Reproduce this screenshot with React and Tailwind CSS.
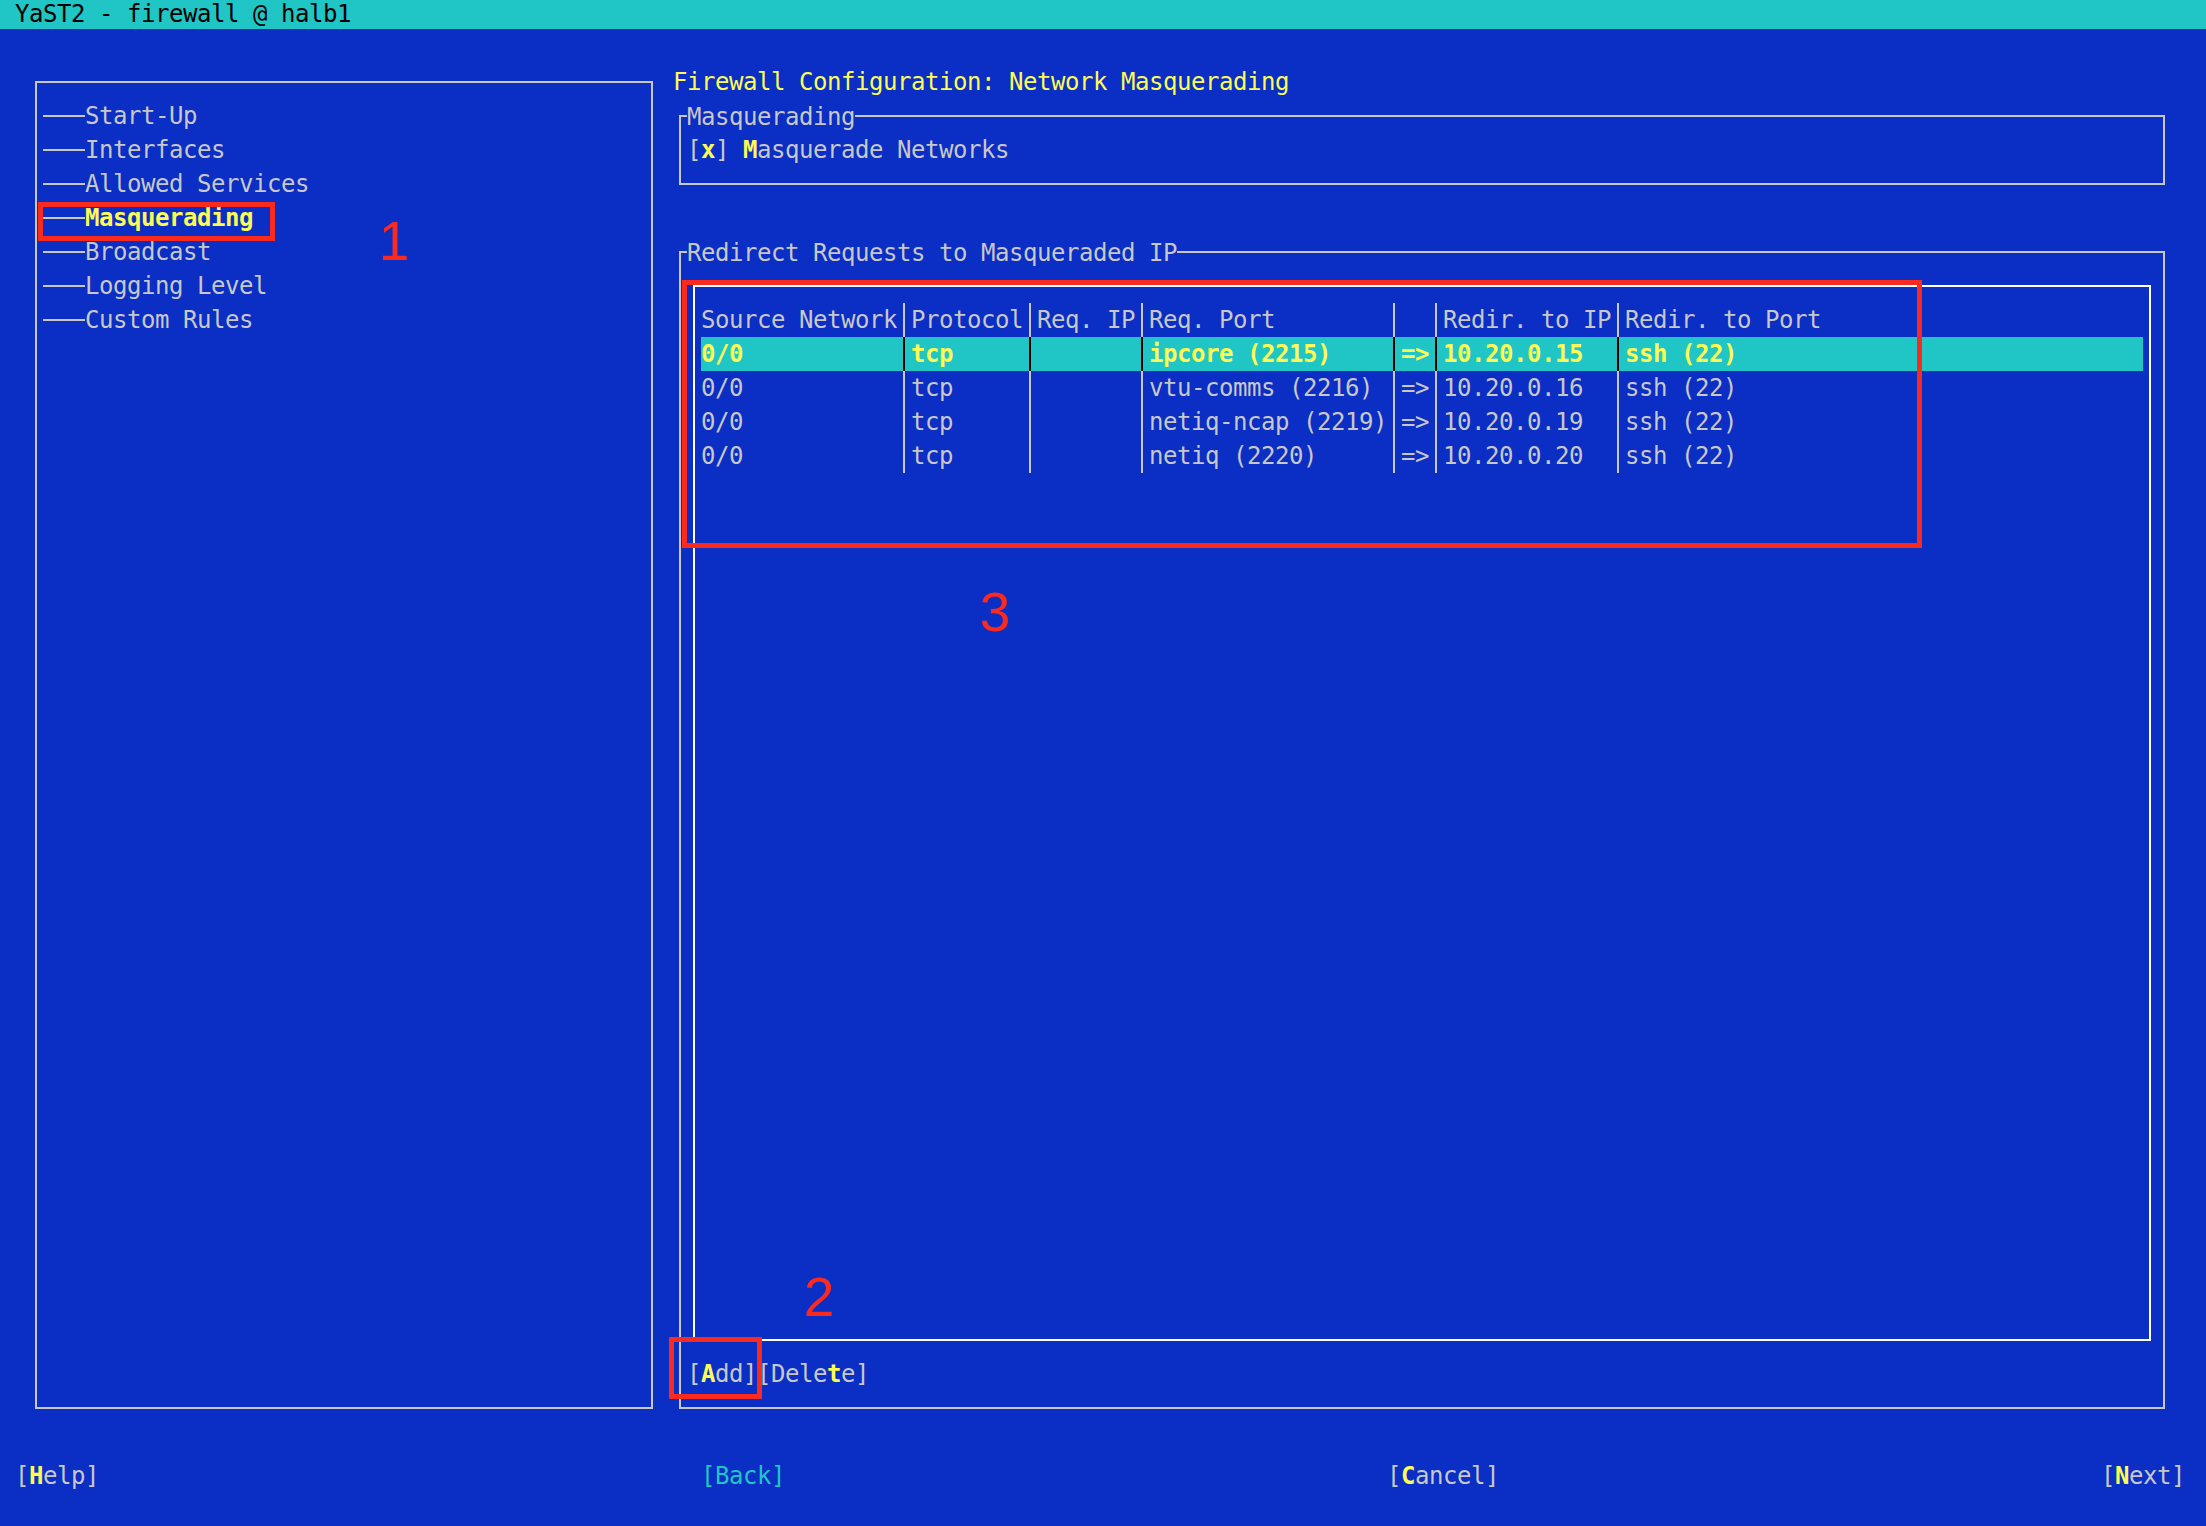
const tree = ["Start-Up", "Interfaces", "Allowed Services", "Masquerading", "Broadcast", "Logging Level", "Custom Rules"];

const widths = ["w-[196px]", "w-[112px]", "w-[98px]", "w-[238px]", "w-[28px]", "w-[168px]", "w-[518px]"];

const header = ["Source Network", "Protocol", "Req. IP", "Req. Port", "", "Redir. to IP", "Redir. to Port"];

const rows = [
  ["0/0", "tcp", "", "ipcore (2215)", "=>", "10.20.0.15", "ssh (22)"],
  ["0/0", "tcp", "", "vtu-comms (2216)", "=>", "10.20.0.16", "ssh (22)"],
  ["0/0", "tcp", "", "netiq-ncap (2219)", "=>", "10.20.0.19", "ssh (22)"],
  ["0/0", "tcp", "", "netiq (2220)", "=>", "10.20.0.20", "ssh (22)"],
];

function Sep({ dark }) {
  return (
    <div className="flex h-full w-[14px] justify-center">
      <div className={dark ? "h-full w-[2px] bg-black" : "h-full w-[2px] bg-[#c8c8c8]"} />
    </div>
  );
}

function TableRow({ cells, selected }) {
  return (
    <div className={selected ? "flex h-[34px] bg-[#20c5c5] font-bold text-[#fcfc54]" : "flex h-[34px]"}>
      {cells.map((c, i) => (
        <div key={i} className="flex h-full">
          {i > 0 && <Sep dark={selected} />}
          <div className={`${widths[i]} overflow-hidden whitespace-pre`}>{c}</div>
        </div>
      ))}
    </div>
  );
}

function Hot({ children }) {
  return <span className="font-bold text-[#fcfc54]">{children}</span>;
}

export default function App() {
  return (
    <div className="relative h-[1526px] w-[2206px] overflow-hidden bg-[#0b2ec4] font-['DejaVu_Sans_Mono',monospace] text-[24px] leading-[34px] tracking-[-0.45px] text-[#c8c8c8]">
      <div className="h-[29px] bg-[#20c5c5] pl-[15px] leading-[29px] text-black">YaST2 - firewall @ halb1</div>

      <div className="flex items-start">
        {/* tree */}
        <div className="ml-[35px] mt-[52px] h-[1328px] w-[618px] border-2 border-[#c8c8c8] pt-[16px]">
          {tree.map((t) => (
            <div key={t} className="flex h-[34px] items-center">
              <div className="ml-[6px] h-[2px] w-[42px] bg-[#c8c8c8]" />
              <span className={t === "Masquerading" ? "font-bold text-[#fcfc54]" : ""}>{t}</span>
            </div>
          ))}
        </div>

        {/* content */}
        <div className="ml-[20px] mt-[36px] flex flex-col">
          <div className="h-[34px] text-[#fcfc54]">Firewall Configuration: Network Masquerading</div>

          <div className="relative ml-[6px] mt-[16px] h-[70px] w-[1486px] border-2 border-[#c8c8c8] pl-[6px] pt-[16px]">
            <div className="absolute left-[6px] top-[-17px] bg-[#0b2ec4]">Masquerading</div>
            <div className="h-[34px] whitespace-pre">
              [<Hot>x</Hot>] <Hot>M</Hot>asquerade Networks
            </div>
          </div>

          <div className="relative ml-[6px] mt-[66px] h-[1158px] w-[1486px] border-2 border-[#c8c8c8] pt-[32px]">
            <div className="absolute left-[6px] top-[-17px] bg-[#0b2ec4]">Redirect Requests to Masqueraded IP</div>
            <div className="mx-[12px] h-[1056px] border-2 border-white px-[6px] pt-[16px]">
              <TableRow cells={header} />
              {rows.map((r, i) => (
                <TableRow key={i} cells={r} selected={i === 0} />
              ))}
            </div>
            <div className="ml-[6px] mt-[16px] h-[34px] whitespace-pre">
              [<Hot>A</Hot>dd][Dele<Hot>t</Hot>e]
            </div>
          </div>
        </div>
      </div>

      <div className="mt-[50px] flex h-[34px] pl-[15px] whitespace-pre">
        <div className="w-[84px]">
          [<Hot>H</Hot>elp]
        </div>
        <div className="ml-[602px] w-[84px] text-[#20c5c5]">[Back]</div>
        <div className="ml-[602px] w-[112px]">
          [<Hot>C</Hot>ancel]
        </div>
        <div className="ml-[602px] w-[84px]">
          [<Hot>N</Hot>ext]
        </div>
      </div>

      {/* red annotations */}
      <div className="absolute left-[38px] top-[202px] h-[39px] w-[237px] border-[5px] border-[#fb2a1f]" />
      <div className="absolute left-[682px] top-[280px] h-[268px] w-[1240px] border-[5px] border-[#fb2a1f]" />
      <div className="absolute left-[669px] top-[1337px] h-[62px] w-[93px] border-[5px] border-[#fb2a1f]" />
      <div className="absolute left-[374px] top-[214px] w-[40px] text-center font-['Liberation_Sans',sans-serif] text-[55px] leading-none tracking-normal text-[#fb2a1f]">1</div>
      <div className="absolute left-[799px] top-[1270px] w-[40px] text-center font-['Liberation_Sans',sans-serif] text-[55px] leading-none tracking-normal text-[#fb2a1f]">2</div>
      <div className="absolute left-[975px] top-[585px] w-[40px] text-center font-['Liberation_Sans',sans-serif] text-[55px] leading-none tracking-normal text-[#fb2a1f]">3</div>
    </div>
  );
}
